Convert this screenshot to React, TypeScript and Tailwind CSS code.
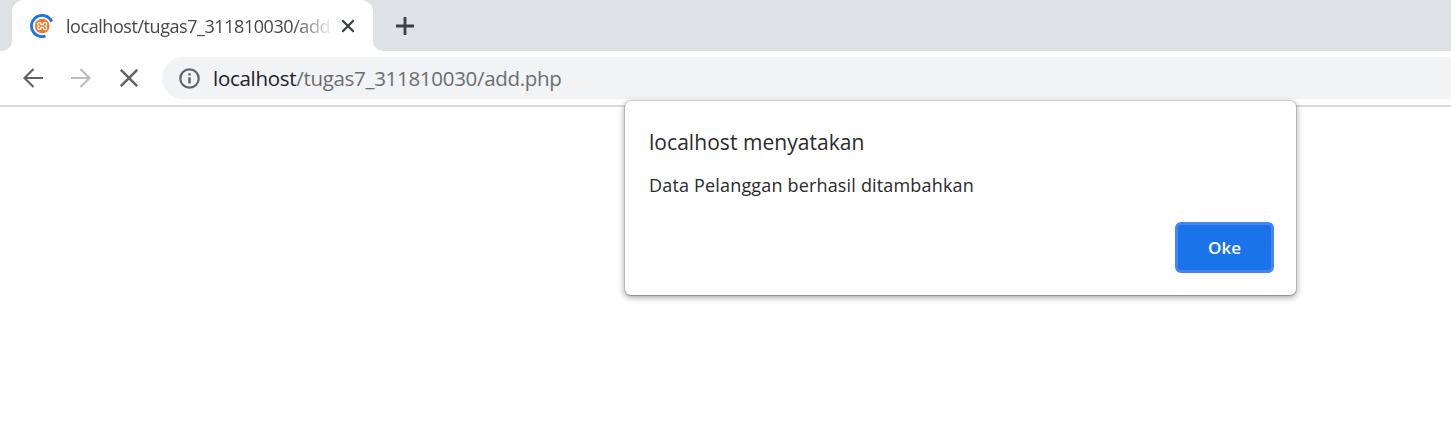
import React from "react";

function Favicon() {
  return (
    <svg width="24" height="24" viewBox="0 0 24 24" fill="none" className="shrink-0">
      <path d="M21.700 7.600A10.600 10.600 0 1 0 15.400 22.100" stroke="#1a73e8" strokeWidth="2.800" />
      <circle cx="12.200" cy="12" r="7.300" fill="#f37623" />
      <path
        d="M8.300 8.900c1.500-1 2.800.2 2.800 1.600h2.200c0-1.400 1.300-2.600 2.800-1.600 1.200 1 .5 2.500-.8 3.100 1.300.6 2 2.100.8 3.100-1.500 1-2.800-.2-2.800-1.600h-2.200c0 1.400-1.300 2.600-2.800 1.600-1.200-1-.5-2.500.8-3.100-1.300-.6-2-2.100-.8-3.100Z"
        stroke="#fff"
        strokeWidth="1.300"
      />
    </svg>
  );
}

function TabStrip() {
  return (
    <div className="flex h-[51px] bg-[#dee1e6]">
      <div className="flex w-3 bg-white">
        <div className="w-full rounded-br-[10px] bg-[#dee1e6]" />
      </div>
      <div className="flex w-[361px] bg-[#dee1e6]">
        <div className="flex w-full items-center rounded-t-[12px] bg-white pl-[18px]">
          <Favicon />
          <div className="ml-3 w-[264px] whitespace-nowrap text-[18px] leading-6 tracking-[-0.44px] text-[#45474a] [mask-image:linear-gradient(to_right,black_228px,transparent_268px)]">
            localhost/tugas7_311810030/add
          </div>
          <svg width="14" height="14" viewBox="0 0 14 14" className="ml-[11px] shrink-0" stroke="#3c4043" strokeWidth="2.3">
            <path d="M1.300 1.300 12.700 12.700M12.700 1.300 1.300 12.700" />
          </svg>
        </div>
      </div>
      <div className="flex grow bg-white">
        <div className="flex grow items-center rounded-bl-[10px] bg-[#dee1e6] pl-[23px]">
          <svg width="18" height="18" viewBox="0 0 18 18" stroke="#3c4043" strokeWidth="2.8">
            <path d="M9 0v18M0 9h18" />
          </svg>
        </div>
      </div>
    </div>
  );
}

function Toolbar() {
  return (
    <div className="flex h-14 items-start border-b-2 border-[#dadce0] bg-white pt-1.5">
      <div className="flex h-[42px] w-[162px] items-center pl-[23px]">
        <svg width="20" height="20" viewBox="0 0 20 20" fill="none" stroke="#5f6368" strokeWidth="2.2">
          <path d="M20 10H1.5M10.5 1 1.5 10l9 9" />
        </svg>
        <svg width="20" height="20" viewBox="0 0 20 20" fill="none" stroke="#bbbdbf" strokeWidth="2.2" className="ml-7">
          <path d="M0 10h18.5M9.500 1l9 9-9 9" />
        </svg>
        <svg width="18" height="18" viewBox="0 0 18 18" fill="none" stroke="#5f6368" strokeWidth="2.5" className="ml-[29px]">
          <path d="m.8.8 16.4 16.400M17.200.8.8 17.200" />
        </svg>
      </div>
      <div className="flex h-[42px] grow items-center rounded-l-full bg-[#f1f3f4] pl-[17px]">
        <svg width="21" height="21" viewBox="0 0 21 21" fill="none" stroke="#5f6368" strokeWidth="2.200">
          <circle cx="10.500" cy="10.500" r="9.200" />
          <path d="M10.500 9.300v6.200M10.500 5.300v2.300" strokeWidth="2.400" />
        </svg>
        <div className="ml-[13px] whitespace-nowrap text-[20.5px] leading-7 tracking-[-0.3px] text-[#6b6e72]">
          <span className="text-[#202124]">localhost</span>
          <span>/tugas7_311810030/add.php</span>
        </div>
      </div>
    </div>
  );
}

function AlertDialog() {
  return (
    <div
      role="alertdialog"
      className="absolute left-[625px] top-[101px] flex h-[194px] w-[671px] flex-col rounded-[6px] bg-white pl-6 pr-[22px] pt-[27px] text-[#292a2d] shadow-[0_0_0_1px_rgba(0,0,0,0.11),0_1px_1px_0_rgba(0,0,0,0.15),0_2px_6px_1px_rgba(0,0,0,0.32)]"
    >
      <h1 className="whitespace-nowrap text-[21px] leading-7 tracking-[0.05px]">localhost menyatakan</h1>
      <p className="mt-[17px] whitespace-nowrap text-[18px] leading-6 tracking-[0.17px]">Data Pelanggan berhasil ditambahkan</p>
      <button className="mt-[25px] h-[51px] w-[99px] self-end rounded-[6px] border-[3px] border-[#4285f4] bg-[#1a73e8] text-[17px] font-semibold text-white">
        Oke
      </button>
    </div>
  );
}

export default function App() {
  return (
    <div className="relative h-[444px] w-full overflow-hidden bg-white font-['Open_Sans','Noto_Sans',sans-serif]">
      <TabStrip />
      <Toolbar />
      <AlertDialog />
    </div>
  );
}
